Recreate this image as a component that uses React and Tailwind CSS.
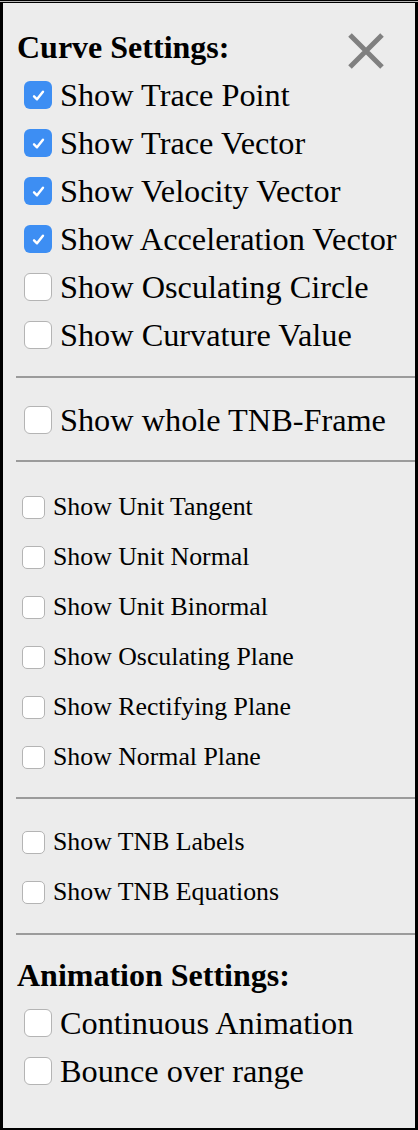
import React from "react";

const serif = { fontFamily: '"Liberation Serif", "Times New Roman", serif' };

function Box({ checked, big }) {
  const size = big ? "w-[28px] h-[28px] rounded-[6px]" : "w-[23px] h-[23px] rounded-[5px]";
  if (checked) {
    return (
      <span className={`${size} shrink-0 bg-[#3d8ef3] flex items-center justify-center`}>
        <svg width="17" height="17" viewBox="0 0 16 16">
          <path d="M3.8 8.8 L6.6 11.6 L12.2 4.4" fill="none" stroke="white" strokeWidth="2.3" strokeLinecap="round" strokeLinejoin="round" />
        </svg>
      </span>
    );
  }
  return <span className={`${size} shrink-0 bg-white border border-[#b4b4b4]`} />;
}

function BigRow({ label, checked }) {
  return (
    <div className="flex items-center h-[48px] pl-[21px]">
      <Box checked={checked} big />
      <span className="ml-[8px] text-[32.3px] leading-[48px] text-black whitespace-nowrap">{label}</span>
    </div>
  );
}

function SmallRow({ label }) {
  return (
    <div className="flex items-center h-[50px] pl-[19px]">
      <Box big={false} />
      <span className="ml-[8px] text-[25.8px] leading-[50px] text-black whitespace-nowrap">{label}</span>
    </div>
  );
}

function Rule({ className }) {
  return <div className={`h-[2px] bg-[#9b9b9b] ml-[13px] ${className}`} />;
}

export default function App() {
  return (
    <div className="w-[418px] h-[1130px] bg-black flex flex-col" style={serif}>
      <div className="h-px bg-black" />
      <div className="h-px bg-[#b8b8b8]" />
      <div className="h-px bg-black" />
      <div className="flex-1 ml-[3px] mr-[3px] mb-[2px] bg-[#ececec] flex flex-col pt-[20px]">
        <div className="flex items-center justify-between h-[48px] pl-[14px] pr-[31px]">
          <span className="text-[32px] leading-[48px] font-bold text-black">Curve Settings:</span>
          <svg width="36" height="36" viewBox="0 0 36 36" className="mt-[8px]">
            <path d="M2 2 L34 34 M34 2 L2 34" stroke="#808080" strokeWidth="5" />
          </svg>
        </div>
        <BigRow label="Show Trace Point" checked />
        <BigRow label="Show Trace Vector" checked />
        <BigRow label="Show Velocity Vector" checked />
        <BigRow label="Show Acceleration Vector" checked />
        <BigRow label="Show Osculating Circle" />
        <BigRow label="Show Curvature Value" />
        <Rule className="mt-[17px]" />
        <div className="mt-[18px]">
          <BigRow label="Show whole TNB-Frame" />
        </div>
        <Rule className="mt-[16px]" />
        <div className="mt-[20px]">
          <SmallRow label="Show Unit Tangent" />
          <SmallRow label="Show Unit Normal" />
          <SmallRow label="Show Unit Binormal" />
          <SmallRow label="Show Osculating Plane" />
          <SmallRow label="Show Rectifying Plane" />
          <SmallRow label="Show Normal Plane" />
        </div>
        <Rule className="mt-[15px]" />
        <div className="mt-[18px]">
          <SmallRow label="Show TNB Labels" />
          <SmallRow label="Show TNB Equations" />
        </div>
        <Rule className="mt-[16px]" />
        <div className="mt-[16px] h-[48px] pl-[14px] flex items-center">
          <span className="text-[32px] leading-[48px] font-bold text-black">Animation Settings:</span>
        </div>
        <BigRow label="Continuous Animation" />
        <BigRow label="Bounce over range" />
      </div>
    </div>
  );
}
